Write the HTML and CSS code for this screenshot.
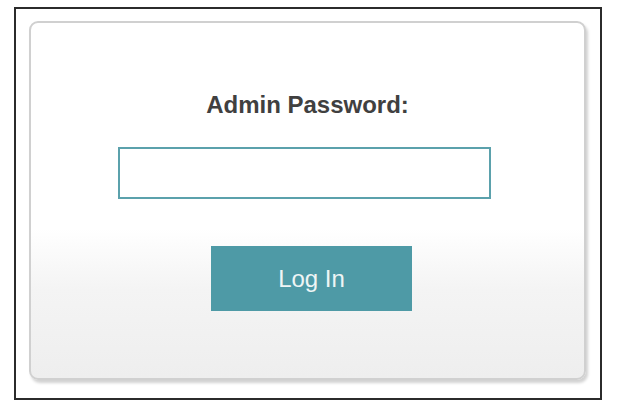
FILE: index.html
```html
<!DOCTYPE html>
<html lang="en">
<head>
    <meta charset="UTF-8">
    <meta name="viewport" content="width=device-width, initial-scale=1.0">
    <title>Login</title>
    <link rel="stylesheet" href="styles.css">
</head>
<body>

<div class="frame">
    <div class="login-card">
        <form class="login-form" onsubmit="event.preventDefault()">
            <label for="adminPassword" class="login-label">Admin Password:</label>
            <input type="password" id="adminPassword" class="login-input">
            <button type="submit" class="login-button">Log In</button>
        </form>
    </div>
</div>

</body>
</html>
```

FILE: styles.css
```css
body {
    font-family: 'Liberation Sans', Arial, sans-serif;
    background-color: #fff;
    margin: 0;
}

.frame {
    margin: 7px 0 0 14px;
    width: 588px;
    height: 393px;
    border: 2px solid #2b2b2b;
    box-sizing: border-box;
    padding: 12px 14px 18px 13px;
}

.login-card {
    height: 100%;
    box-sizing: border-box;
    border: 2px solid #d0d0d0;
    border-radius: 9px;
    box-shadow: 2px 3px 3px rgba(0, 0, 0, 0.18);
    background: linear-gradient(to bottom, #fff 0%, #fff 58%, #f4f4f4 75%, #eeeeee 100%);
}

.login-form {
    display: flex;
    flex-direction: column;
    align-items: center;
    padding-top: 68px;
}

.login-label {
    font-size: 24px;
    line-height: 28px;
    font-weight: bold;
    color: #404040;
}

.login-input {
    width: 373px;
    height: 52px;
    margin: 28px 6px 0 0;
    box-sizing: border-box;
    border: 2px solid #5ba1ac;
    background-color: #fff;
    outline: none;
}

.login-button {
    width: 201px;
    height: 65px;
    margin: 47px 0 0 8px;
    background-color: #4e9aa6;
    color: #eef5f5;
    font-family: inherit;
    font-size: 24px;
    border: none;
    cursor: pointer;
}

.login-button:hover {
    background-color: #438d99;
}
```
